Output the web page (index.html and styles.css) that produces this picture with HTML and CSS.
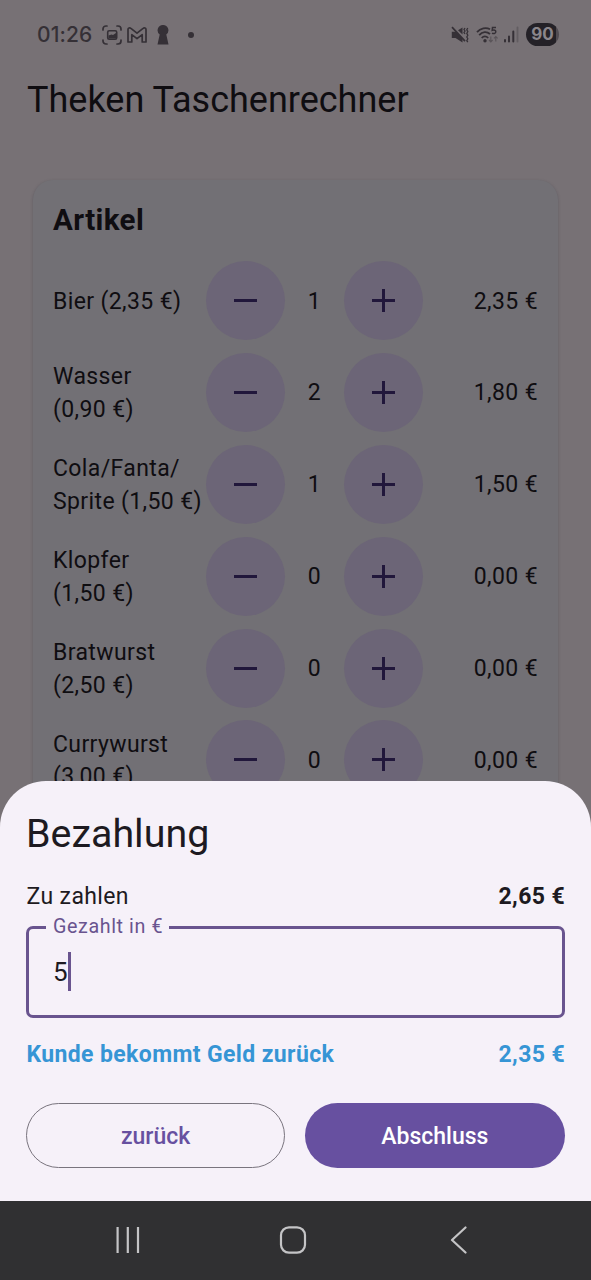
FILE: index.html
```html
<!DOCTYPE html>
<html lang="de">
<head>
<meta charset="utf-8">
<title>Theken Taschenrechner</title>
<link rel="stylesheet" href="styles.css">
</head>
<body>
<div class="phone">
  <header class="status">
    <div class="status-left">
      <span class="clock">01:26</span>
      <svg class="ic-shot" width="20" height="20" viewBox="0 0 20 20" fill="none" stroke="currentColor" stroke-width="1.700" stroke-linecap="round"><path d="M1 5V4a3 3 0 0 1 3-3h1M15 1h1a3 3 0 0 1 3 3v1M19 15v1a3 3 0 0 1-3 3h-1M5 19H4a3 3 0 0 1-3-3v-1"/><rect x="5.700" y="5.800" width="9" height="8.400" rx="1.500" stroke-width="1.600"/><path d="M6.500 13.500V10.500l3-1 1.500.5 3-2v5.500z" fill="currentColor" stroke="none"/></svg>
      <svg class="ic-mail" width="20" height="16" viewBox="0 0 20 16" fill="none" stroke="currentColor" stroke-width="1.700" stroke-linejoin="round"><path d="M1 15V2.500C1 1 2.700.4 3.900 1.400L10 6.200l6.100-4.800C17.300.4 19 1 19 2.500V15h-3.800V7.700L10 11.700 4.800 7.700V15z"/></svg>
      <svg class="ic-key" width="12" height="20" viewBox="0 0 12 20" fill="currentColor"><path d="M6 0a5.300 5.300 0 0 1 3.300 9.500L11.500 19.500H.5L2.700 9.500A5.300 5.300 0 0 1 6 0z"/></svg>
      <span class="dot"></span>
    </div>
    <div class="status-right">
      <svg width="18" height="18" viewBox="0 0 18 18" fill="currentColor"><path d="M.8 5.800h3.700L11.500 12v4.500L4.500 12H.8zM7 4.300l4.500-2.800v7z"/><path d="M1 1.200l13 14" stroke="currentColor" stroke-width="1.700"/><path d="M14 2l-1 1.500 1 1.500-1 1.500 1 1.500M16.800 2l-1 1.800 1 1.800-1 1.800 1 1.800-1 1.800 1 1.800-1 1.800 1 1.500" fill="none" stroke="currentColor" stroke-width="1.300"/></svg>
      <svg class="ic-wifi" width="24" height="18" viewBox="0 0 24 18" fill="none" stroke="currentColor" stroke-width="1.800"><path d="M1 6.200C4.500 2 10 1 14 3.200M3.200 9.200c3.200-3.800 7.600-4 10.800-1.200M5.700 12c2-2.200 4.500-2.200 6.500 0"/><circle cx="9" cy="14.700" r="1.700" fill="currentColor" stroke="none"/><path d="M20 1.400h-3.500l-.3 3c2-.8 3.800 0 3.600 1.600s-2.300 1.900-3.800 1.100" stroke-width="1.500"/><path d="M14.800 10.500v5M13 14l1.800 1.900L16.600 14M19.800 15.500v-5M18 12.400l1.800-1.900 1.800 1.900" stroke-width="1.100" opacity=".45"/></svg>
      <svg class="ic-signal" width="16" height="17" viewBox="0 0 16 17" stroke="currentColor" stroke-width="2" stroke-linecap="round"><path d="M2 14v1.500M6 10.500v5M10.300 5.500v10"/><path d="M14.500 1.500v14" stroke-width="1.800" opacity=".3"/></svg>
      <span class="battery">90</span>
    </div>
  </header>

  <h1 class="app-title">Theken Taschenrechner</h1>

  <main class="card">
    <h2 class="card-title">Artikel</h2>
    <div class="row"><span class="name">Bier (2,35 €)</span><button class="step minus"></button><span class="count">1</span><button class="step plus"></button><span class="sum">2,35 €</span></div>
    <div class="row"><span class="name">Wasser<br>(0,90 €)</span><button class="step minus"></button><span class="count">2</span><button class="step plus"></button><span class="sum">1,80 €</span></div>
    <div class="row"><span class="name">Cola/Fanta/<br>Sprite (1,50 €)</span><button class="step minus"></button><span class="count">1</span><button class="step plus"></button><span class="sum">1,50 €</span></div>
    <div class="row"><span class="name">Klopfer<br>(1,50 €)</span><button class="step minus"></button><span class="count">0</span><button class="step plus"></button><span class="sum">0,00 €</span></div>
    <div class="row"><span class="name">Bratwurst<br>(2,50 €)</span><button class="step minus"></button><span class="count">0</span><button class="step plus"></button><span class="sum">0,00 €</span></div>
    <div class="row"><span class="name">Currywurst<br>(3,00 €)</span><button class="step minus"></button><span class="count">0</span><button class="step plus"></button><span class="sum">0,00 €</span></div>
  </main>

  <div class="overlay">
    <section class="sheet">
      <h2 class="sheet-title">Bezahlung</h2>
      <div class="line due"><span>Zu zahlen</span><b>2,65 €</b></div>
      <fieldset class="field">
        <legend>Gezahlt in €</legend>
        <span class="value">5</span><span class="caret"></span>
      </fieldset>
      <div class="line change"><span>Kunde bekommt Geld zurück</span><span>2,35 €</span></div>
      <div class="actions">
        <button class="btn outlined">zurück</button>
        <button class="btn filled">Abschluss</button>
      </div>
    </section>
    <nav class="navbar">
      <svg width="26" height="28" viewBox="0 0 26 28" stroke="currentColor" stroke-width="2.200"><path d="M2.600 1v26M12.800 1v26M23 1v26"/></svg>
      <svg width="28" height="28" viewBox="0 0 28 28" fill="none" stroke="currentColor" stroke-width="2.200"><rect x="2" y="1.300" width="24" height="25.400" rx="8"/></svg>
      <svg width="18" height="28" viewBox="0 0 18 28" fill="none" stroke="currentColor" stroke-width="2.200" stroke-linejoin="round" stroke-linecap="round"><path d="M16.500 1.500L3 14l13.500 12.500"/></svg>
    </nav>
  </div>
</div>
</body>
</html>
```
FILE: styles.css
```css
* { box-sizing: border-box; }

body {
  margin: 0;
  font-family: Roboto, "Liberation Sans", sans-serif;
}

h1, h2 { margin: 0; font-weight: 400; }

button { border: 0; padding: 0; font: inherit; letter-spacing: inherit; }

.phone {
  position: relative;
  width: 591px;
  height: 1280px;
  overflow: hidden;
  background: #777175;
  color: #0f0d11;
}

/* status bar */
.status {
  display: flex;
  justify-content: space-between;
  height: 69px;
  padding: 0 32px 0 37px;
  color: #353036;
}

.status-left, .status-right { display: flex; align-items: center; }

.clock {
  width: 55px;
  font: 500 21px/24px Inter, sans-serif;
  letter-spacing: .1px;
  white-space: nowrap;
}

.ic-shot { margin-left: 10px; }
.ic-mail { margin-left: 5px; }
.ic-key { margin-left: 10px; }

.dot {
  width: 6px;
  height: 6px;
  margin-left: 19px;
  border-radius: 50%;
  background: currentColor;
}

.ic-wifi { margin-left: 7px; }
.ic-signal { margin: 0 1px 0 3px; }

.battery {
  width: 33px;
  height: 23px;
  margin-left: 6px;
  border-radius: 12px;
  background: linear-gradient(90deg, #242127 91%, #514c52 91%);
  color: #8b868b;
  font: 700 17px/23px Inter, sans-serif;
  text-align: center;
}

/* article list */
.app-title {
  padding: 10px 27px 0;
  font-size: 36px;
  line-height: 42px;
}

.card {
  width: 525px;
  height: 700px;
  margin: 59px 0 0 33px;
  padding: 20px 20px 0;
  border-radius: 20px;
  background: #727075;
  box-shadow: 0 1px 3px rgba(50, 50, 60, .35);
}

.card-title {
  height: 61px;
  font-size: 29.500px;
  font-weight: 700;
  line-height: 40px;
  letter-spacing: .4px;
}

.row {
  display: grid;
  grid-template-columns: 153px 79px 59px 79px 1fr;
  align-items: center;
  height: 91.900px;
  padding-bottom: 13px;
  font-size: 23px;
  line-height: 32.800px;
  letter-spacing: .38px;
}

.name, .count, .sum { padding-top: 3px; }
.name { white-space: nowrap; }
.count { text-align: center; }
.sum { text-align: right; }

.step {
  display: grid;
  place-items: center;
  width: 79px;
  height: 79px;
  border-radius: 50%;
  background: #6c6577;
}

.step::before, .step::after {
  grid-area: 1 / 1;
  width: 23px;
  height: 3px;
  background: #21173b;
}

.step::before { content: ""; }
.plus::after { content: ""; transform: rotate(90deg); }

/* payment sheet over the list */
.overlay {
  position: absolute;
  inset: auto 0 0;
}

.sheet {
  height: 420px;
  padding: 32px 26px 0;
  border-radius: 46px 46px 0 0;
  background: #f6f1f9;
  color: #1d1a21;
}

.sheet-title {
  height: 68px;
  font-size: 39.400px;
  line-height: 42px;
}

.line {
  display: flex;
  justify-content: space-between;
  padding-left: .5px;
  font-size: 23px;
  line-height: 32px;
  letter-spacing: .38px;
}

.field {
  display: flex;
  align-items: center;
  width: 539px;
  height: 103px;
  min-width: 0;
  margin: 2px 0 0;
  padding: 0 24px 11px;
  border: 3px solid #69548f;
  border-radius: 7px;
}

.field legend {
  margin-left: -7px;
  padding: 0 6px 0 7px;
  color: #69548f;
  font-size: 19.700px;
  line-height: 24px;
  letter-spacing: .6px;
}

.value { font-size: 26px; line-height: 38px; }

.caret { width: 3px; height: 39px; background: #69548f; }

.change {
  margin-top: 21px;
  color: #3695d5;
  font-weight: 700;
}

.actions {
  display: grid;
  grid-template-columns: 1fr 1fr;
  gap: 20px;
  margin: 32px .5px 0 0;
}

.btn {
  height: 65px;
  padding-top: 1px;
  border-radius: 33px;
  font-size: 23px;
  font-weight: 500;
}

.outlined {
  border: 1.500px solid #79747e;
  background: transparent;
  color: #6750a0;
}

.filled { background: #6750a0; color: #fff; }

/* system navigation */
.navbar {
  display: grid;
  grid-template-columns: 164px 170px 18px;
  align-items: center;
  height: 79px;
  padding: 0 0 2px 115px;
  background: #303032;
  color: #c4c4c6;
}
```
